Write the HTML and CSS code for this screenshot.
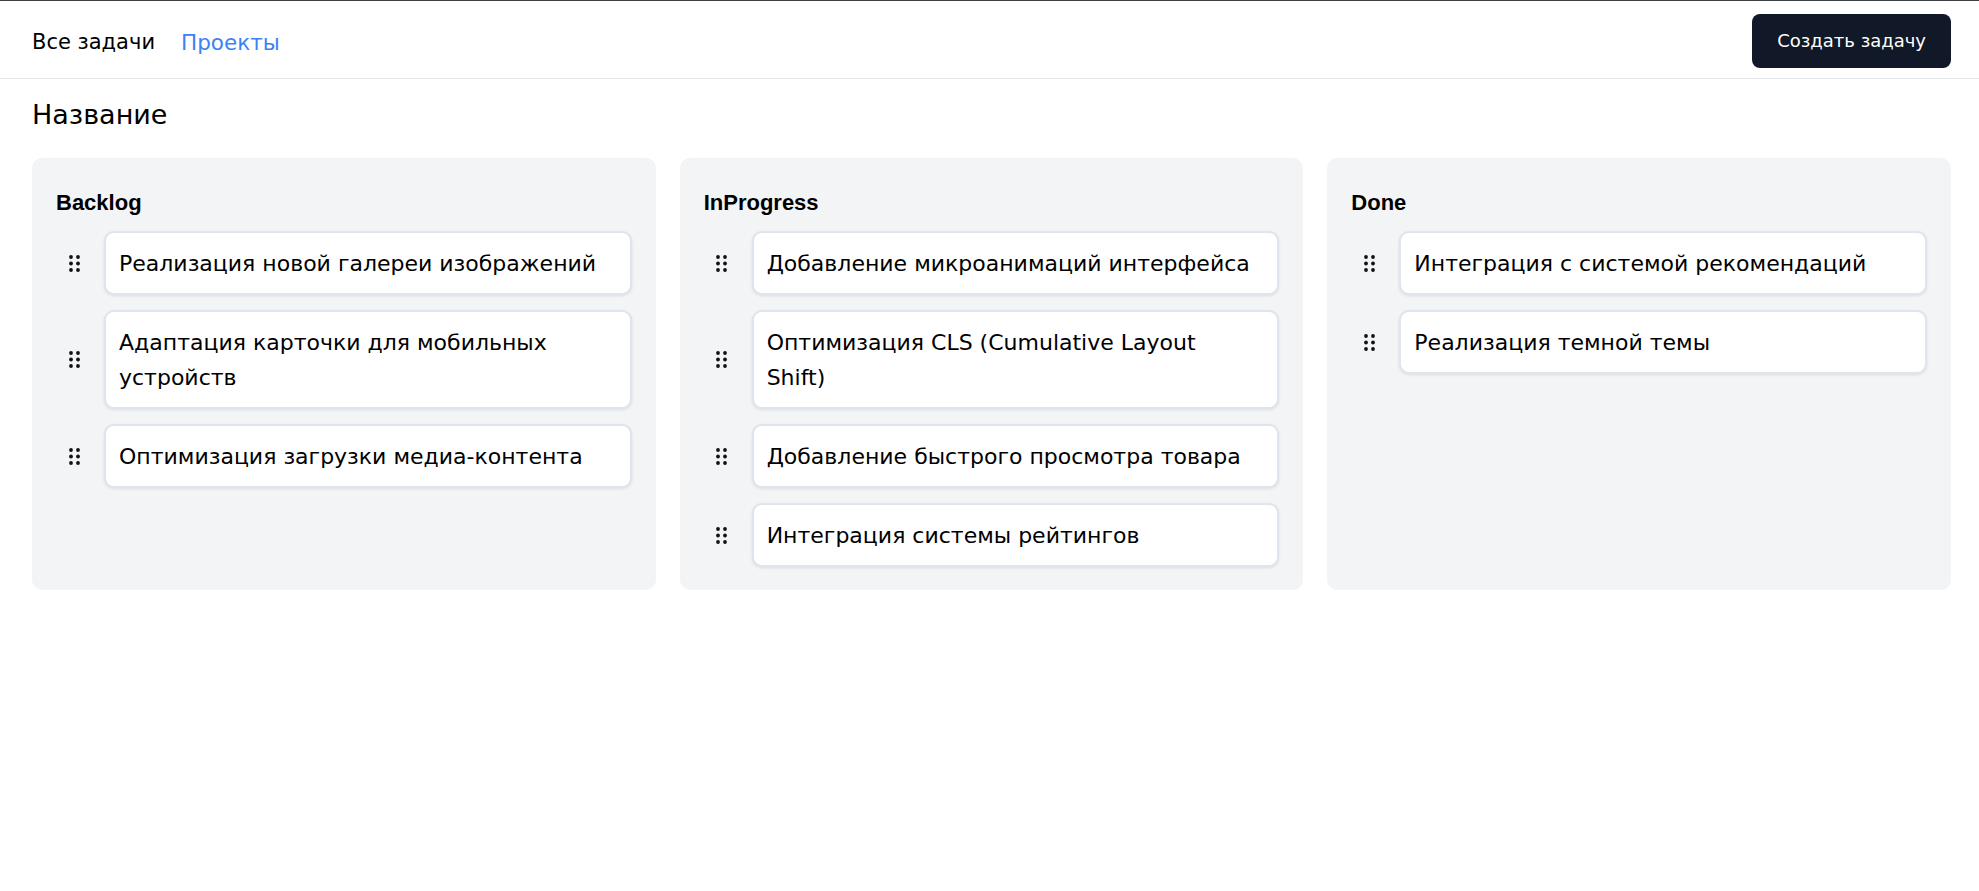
FILE: index.html
```html
<!DOCTYPE html>
<html lang="ru">
<head>
<meta charset="utf-8">
<title>Задачи</title>
<link rel="stylesheet" href="styles.css">
</head>
<body>
<header class="topbar">
  <nav class="nav">
    <a class="nav-link" href="#">Все задачи</a>
    <a class="nav-link nav-link-active" href="#">Проекты</a>
  </nav>
  <button class="btn-create" type="button">Создать задачу</button>
</header>
<main class="page">
  <h1 class="title">Название</h1>
  <div class="board">
    <section class="column">
      <h2 class="column-title">Backlog</h2>
      <ul class="task-list">
        <li class="task-row">
          <span class="handle"><svg class="grip" viewBox="0 0 11 17" width="11" height="17"><circle cx="2" cy="2" r="1.9"/><circle cx="9" cy="2" r="1.9"/><circle cx="2" cy="8.5" r="1.9"/><circle cx="9" cy="8.5" r="1.9"/><circle cx="2" cy="15" r="1.9"/><circle cx="9" cy="15" r="1.9"/></svg></span>
          <div class="task-card">Реализация новой галереи изображений</div>
        </li>
        <li class="task-row">
          <span class="handle"><svg class="grip" viewBox="0 0 11 17" width="11" height="17"><circle cx="2" cy="2" r="1.9"/><circle cx="9" cy="2" r="1.9"/><circle cx="2" cy="8.5" r="1.9"/><circle cx="9" cy="8.5" r="1.9"/><circle cx="2" cy="15" r="1.9"/><circle cx="9" cy="15" r="1.9"/></svg></span>
          <div class="task-card">Адаптация карточки для мобильных устройств</div>
        </li>
        <li class="task-row">
          <span class="handle"><svg class="grip" viewBox="0 0 11 17" width="11" height="17"><circle cx="2" cy="2" r="1.9"/><circle cx="9" cy="2" r="1.9"/><circle cx="2" cy="8.5" r="1.9"/><circle cx="9" cy="8.5" r="1.9"/><circle cx="2" cy="15" r="1.9"/><circle cx="9" cy="15" r="1.9"/></svg></span>
          <div class="task-card">Оптимизация загрузки медиа-контента</div>
        </li>
      </ul>
    </section>
    <section class="column">
      <h2 class="column-title">InProgress</h2>
      <ul class="task-list">
        <li class="task-row">
          <span class="handle"><svg class="grip" viewBox="0 0 11 17" width="11" height="17"><circle cx="2" cy="2" r="1.9"/><circle cx="9" cy="2" r="1.9"/><circle cx="2" cy="8.5" r="1.9"/><circle cx="9" cy="8.5" r="1.9"/><circle cx="2" cy="15" r="1.9"/><circle cx="9" cy="15" r="1.9"/></svg></span>
          <div class="task-card">Добавление микроанимаций интерфейса</div>
        </li>
        <li class="task-row">
          <span class="handle"><svg class="grip" viewBox="0 0 11 17" width="11" height="17"><circle cx="2" cy="2" r="1.9"/><circle cx="9" cy="2" r="1.9"/><circle cx="2" cy="8.5" r="1.9"/><circle cx="9" cy="8.5" r="1.9"/><circle cx="2" cy="15" r="1.9"/><circle cx="9" cy="15" r="1.9"/></svg></span>
          <div class="task-card">Оптимизация CLS (Cumulative Layout Shift)</div>
        </li>
        <li class="task-row">
          <span class="handle"><svg class="grip" viewBox="0 0 11 17" width="11" height="17"><circle cx="2" cy="2" r="1.9"/><circle cx="9" cy="2" r="1.9"/><circle cx="2" cy="8.5" r="1.9"/><circle cx="9" cy="8.5" r="1.9"/><circle cx="2" cy="15" r="1.9"/><circle cx="9" cy="15" r="1.9"/></svg></span>
          <div class="task-card">Добавление быстрого просмотра товара</div>
        </li>
        <li class="task-row">
          <span class="handle"><svg class="grip" viewBox="0 0 11 17" width="11" height="17"><circle cx="2" cy="2" r="1.9"/><circle cx="9" cy="2" r="1.9"/><circle cx="2" cy="8.5" r="1.9"/><circle cx="9" cy="8.5" r="1.9"/><circle cx="2" cy="15" r="1.9"/><circle cx="9" cy="15" r="1.9"/></svg></span>
          <div class="task-card">Интеграция системы рейтингов</div>
        </li>
      </ul>
    </section>
    <section class="column">
      <h2 class="column-title">Done</h2>
      <ul class="task-list">
        <li class="task-row">
          <span class="handle"><svg class="grip" viewBox="0 0 11 17" width="11" height="17"><circle cx="2" cy="2" r="1.9"/><circle cx="9" cy="2" r="1.9"/><circle cx="2" cy="8.5" r="1.9"/><circle cx="9" cy="8.5" r="1.9"/><circle cx="2" cy="15" r="1.9"/><circle cx="9" cy="15" r="1.9"/></svg></span>
          <div class="task-card">Интеграция с системой рекомендаций</div>
        </li>
        <li class="task-row">
          <span class="handle"><svg class="grip" viewBox="0 0 11 17" width="11" height="17"><circle cx="2" cy="2" r="1.9"/><circle cx="9" cy="2" r="1.9"/><circle cx="2" cy="8.5" r="1.9"/><circle cx="9" cy="8.5" r="1.9"/><circle cx="2" cy="15" r="1.9"/><circle cx="9" cy="15" r="1.9"/></svg></span>
          <div class="task-card">Реализация темной темы</div>
        </li>
      </ul>
    </section>
  </div>
</main>
</body>
</html>
```
FILE: styles.css
```css
* {
  box-sizing: border-box;
}

html, body {
  background: #ffffff;
}

body {
  margin: 0;
  border-top: 1px solid #3f3f42;
  font-family: "DejaVu Sans", "Noto Sans", sans-serif;
  color: #000000;
}

.topbar {
  height: 78px;
  display: flex;
  align-items: center;
  justify-content: space-between;
  padding: 0 28px 0 32px;
  border-bottom: 1px solid #e5e7eb;
}

.nav {
  display: flex;
  gap: 26px;
  padding-top: 5px;
}

.nav-link {
  font-size: 21px;
  line-height: 35px;
  color: #000000;
  text-decoration: none;
}

.nav-link-active {
  color: #3b82f6;
  font-size: 21.5px;
}

.btn-create {
  height: 54px;
  padding: 0 25px;
  border: none;
  border-radius: 8px;
  background: #111827;
  color: #ffffff;
  font-family: "DejaVu Sans", "Noto Sans", sans-serif;
  font-size: 18px;
  line-height: 28px;
  margin-top: 2px;
}

.page {
  padding: 0 28px 0 32px;
}

.title {
  margin: 16px 0 0;
  font-size: 27px;
  line-height: 40px;
  font-weight: 400;
}

.board {
  margin-top: 23px;
  display: grid;
  grid-template-columns: repeat(3, 1fr);
  gap: 24px;
  align-items: stretch;
}

.column {
  background: #f3f4f6;
  border-radius: 10px;
  padding: 27px 24px 23px 24px;
}

.column-title {
  margin: 0 0 11px;
  font-family: "Liberation Sans", "DejaVu Sans", sans-serif;
  font-weight: 700;
  font-size: 22px;
  line-height: 35px;
}

.task-list {
  list-style: none;
  margin: 0;
  padding: 0;
  display: flex;
  flex-direction: column;
  gap: 15px;
}

.task-row {
  display: flex;
  align-items: center;
  gap: 12px;
}

.handle {
  flex: 0 0 36px;
  display: flex;
  justify-content: center;
  align-items: center;
}

.grip {
  display: block;
  fill: #111111;
}

.task-card {
  flex: 1;
  min-width: 0;
  background: #ffffff;
  border: 2px solid #dfe5ee;
  border-radius: 10px;
  padding: 12.5px 22px 12.5px 13px;
  font-size: 22px;
  line-height: 35px;
  box-shadow: 0 1px 3px rgba(15, 23, 42, 0.1);
}
```
